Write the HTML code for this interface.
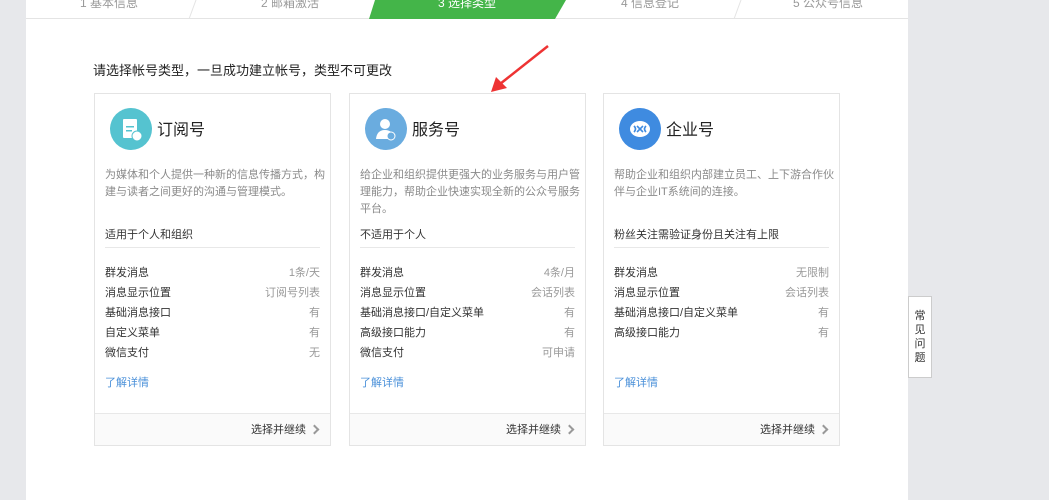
<!DOCTYPE html>
<html><head><meta charset="utf-8"><style>
*{margin:0;padding:0;box-sizing:border-box}
body{width:1049px;height:500px;background:#e7e8eb;font-family:"Liberation Sans","Noto Sans CJK SC",sans-serif;position:relative;overflow:hidden;font-size:12px;color:#222}
.main{position:absolute;left:26px;top:0;width:882px;height:500px;background:#fff}
.steps{position:absolute;left:26px;top:0;width:882px;height:19px;border-bottom:1px solid #e4e4e4}
.st{position:absolute;top:-6px;font-size:12px;color:#999;width:200px;text-align:center}
.hint{position:absolute;left:93px;top:60px;font-size:13px;color:#222}
.card{position:absolute;top:93px;width:237px;height:353px;border:1px solid #e4e4e4;background:#fff}
.ic{position:absolute;left:15px;top:14px;width:42px;height:42px;border-radius:50%}
.tt{position:absolute;left:62px;top:22px;font-size:16px;color:#222}
.desc{position:absolute;left:10px;top:73px;width:221px;font-size:11px;line-height:17px;color:#8a8a8a}
.fit{position:absolute;left:10px;top:132px;font-size:11px;color:#333}
.hr{position:absolute;left:10px;right:10px;top:153px;border-top:1px solid #e8e8e8}
.rows{position:absolute;left:10px;right:10px;top:171px}
.row{height:20px;line-height:16px;font-size:11px;color:#333;display:flex;justify-content:space-between}
.row span:last-child{color:#999}
.more{position:absolute;left:10px;top:280px;font-size:11px;color:#4a90d9}
.foot{position:absolute;left:0;right:0;bottom:0;height:32px;background:#fafafa;border-top:1px solid #e8e8e8;text-align:right;padding-right:8px;line-height:33px;font-size:11px;color:#333}
.foot b{display:inline-block;width:7px;height:7px;border-right:2px solid #999;border-top:2px solid #999;transform:rotate(45deg);margin-left:5px;margin-right:4px}
.faq{position:absolute;left:908px;top:296px;width:24px;height:82px;background:#fff;border:1px solid #ccc;font-size:11px;line-height:14px;text-align:center;padding-top:12px;color:#333}
</style></head><body>
<div class="main"></div>
<div class="steps">
<svg style="position:absolute;left:0;top:0" width="882" height="19">
<polygon points="349,0 540,0 529,19 343,19" fill="#44b549"/>
<line x1="170" y1="0" x2="163" y2="19" stroke="#e4e4e4"/>
<line x1="715" y1="0" x2="708" y2="19" stroke="#e4e4e4"/>
</svg>
<div class="st" style="left:-17px">1 基本信息</div>
<div class="st" style="left:164px">2 邮箱激活</div>
<div class="st" style="left:341px;color:#fff">3 选择类型</div>
<div class="st" style="left:524px">4 信息登记</div>
<div class="st" style="left:702px">5 公众号信息</div>
</div>
<svg style="position:absolute;left:0;top:0" width="1049" height="500"><line x1="548" y1="46" x2="500" y2="84" stroke="#e33" stroke-width="2.5"/><polygon points="491,92 496,77 507,88" fill="#e33"/></svg>
<div class="hint">请选择帐号类型，一旦成功建立帐号，类型不可更改</div>

<div class="card" style="left:94px">
<div class="ic" style="background:#55c3d0"><svg width="42" height="42"><rect x="13" y="11" width="14" height="19" rx="1" fill="#fff"/><rect x="16" y="18" width="8" height="1.5" fill="#55c3d0"/><rect x="16" y="22" width="6" height="1.5" fill="#55c3d0"/><circle cx="27" cy="28" r="5" fill="#fff" stroke="#55c3d0"/></svg></div>
<div class="tt">订阅号</div>
<div class="desc">为媒体和个人提供一种新的信息传播方式，构建与读者之间更好的沟通与管理模式。</div>
<div class="fit">适用于个人和组织</div><div class="hr"></div>
<div class="rows"><div class="row"><span>群发消息</span><span>1条/天</span></div><div class="row"><span>消息显示位置</span><span>订阅号列表</span></div><div class="row"><span>基础消息接口</span><span>有</span></div><div class="row"><span>自定义菜单</span><span>有</span></div><div class="row"><span>微信支付</span><span>无</span></div></div>
<div class="more">了解详情</div>
<div class="foot">选择并继续<b></b></div>
</div>

<div class="card" style="left:349px">
<div class="ic" style="background:#6aacdf"><svg width="42" height="42"><circle cx="20" cy="16" r="5" fill="#fff"/><path d="M11 31 Q12 22 20 22 Q28 22 29 31Z" fill="#fff"/><circle cx="26" cy="28" r="4" fill="#6aacdf" stroke="#fff"/></svg></div>
<div class="tt">服务号</div>
<div class="desc">给企业和组织提供更强大的业务服务与用户管理能力，帮助企业快速实现全新的公众号服务平台。</div>
<div class="fit">不适用于个人</div><div class="hr"></div>
<div class="rows"><div class="row"><span>群发消息</span><span>4条/月</span></div><div class="row"><span>消息显示位置</span><span>会话列表</span></div><div class="row"><span>基础消息接口/自定义菜单</span><span>有</span></div><div class="row"><span>高级接口能力</span><span>有</span></div><div class="row"><span>微信支付</span><span>可申请</span></div></div>
<div class="more">了解详情</div>
<div class="foot">选择并继续<b></b></div>
</div>

<div class="card" style="left:603px">
<div class="ic" style="background:#3f8be0"><svg width="42" height="42"><ellipse cx="21" cy="21" rx="10" ry="8" fill="#fff"/><path d="M15 18 Q18 21 15 24 M27 18 Q24 21 27 24 M18 18 L24 24 M24 18 L18 24" stroke="#3f8be0" stroke-width="1.6" fill="none"/></svg></div>
<div class="tt">企业号</div>
<div class="desc">帮助企业和组织内部建立员工、上下游合作伙<br>伴与企业IT系统间的连接。</div>
<div class="fit">粉丝关注需验证身份且关注有上限</div><div class="hr"></div>
<div class="rows"><div class="row"><span>群发消息</span><span>无限制</span></div><div class="row"><span>消息显示位置</span><span>会话列表</span></div><div class="row"><span>基础消息接口/自定义菜单</span><span>有</span></div><div class="row"><span>高级接口能力</span><span>有</span></div></div>
<div class="more">了解详情</div>
<div class="foot">选择并继续<b></b></div>
</div>

<div class="faq">常<br>见<br>问<br>题</div>
</body></html>
